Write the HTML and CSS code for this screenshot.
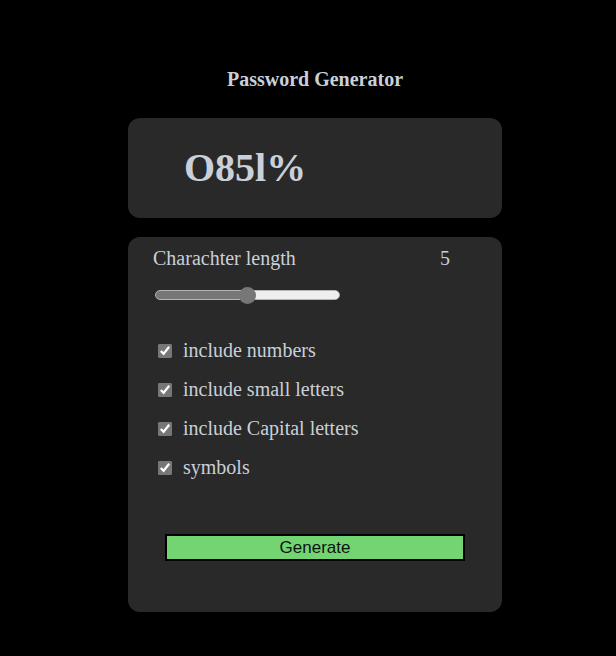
FILE: index.html
```html
<!DOCTYPE html>
<html>
<head>
<meta charset="utf-8">
<link rel="stylesheet" href="styles.css">
</head>
<body>
<div class="app">
  <h3 class="title">Password Generator</h3>
  <div class="card display">
    <span class="password">O85l%</span>
  </div>
  <div class="card settings">
    <div class="length-row">
      <span>Charachter length</span>
      <span class="length-value">5</span>
    </div>
    <input class="slider" type="range" min="0" max="10" value="5">
    <div class="options">
      <label class="option"><input type="checkbox" checked><span>include numbers</span></label>
      <label class="option"><input type="checkbox" checked><span>include small letters</span></label>
      <label class="option"><input type="checkbox" checked><span>include Capital letters</span></label>
      <label class="option"><input type="checkbox" checked><span>symbols</span></label>
    </div>
    <button class="generate">Generate</button>
  </div>
</div>
</body>
</html>
```
FILE: styles.css
```css
html, body {
  margin: 0;
  padding: 0;
  background: #000;
}
body {
  font-family: "Liberation Serif", "Times New Roman", serif;
  color: #c9d0da;
}
.app {
  display: flex;
  flex-direction: column;
  align-items: center;
  padding-top: 68px;
  padding-left: 14px;
}
.title {
  margin: 0;
  font-size: 20px;
  font-weight: bold;
  line-height: 23px;
}
.card {
  width: 374px;
  background: #292929;
  border-radius: 12px;
  box-sizing: border-box;
}
.display {
  margin-top: 27px;
  height: 100px;
  display: flex;
  align-items: center;
  padding-left: 56px;
}
.password {
  font-size: 40px;
  font-weight: bold;
  line-height: 46px;
}
.settings {
  margin-top: 19px;
  height: 375px;
  padding: 10px 0 0 25px;
  display: flex;
  flex-direction: column;
}
.length-row {
  display: flex;
  justify-content: space-between;
  width: 297px;
  font-size: 20px;
  line-height: 23px;
}
.slider {
  -webkit-appearance: none;
  appearance: none;
  margin: 20px 0 0 2px;
  width: 185px;
  height: 10px;
  box-sizing: border-box;
  border: 1px solid #b5b5b5;
  border-radius: 5px;
  background: linear-gradient(to right, #777 0%, #777 50%, #efefef 50%, #efefef 100%);
}
.slider::-webkit-slider-thumb {
  -webkit-appearance: none;
  appearance: none;
  width: 17px;
  height: 17px;
  border-radius: 50%;
  background: #777;
  border: none;
}
.options {
  margin-top: 39px;
  display: flex;
  flex-direction: column;
  gap: 16px;
}
.option {
  display: flex;
  align-items: center;
  font-size: 20px;
  line-height: 23px;
}
.option input {
  margin: 0 11px 0 5px;
  width: 14px;
  height: 14px;
  accent-color: #777;
}
.generate {
  margin: 55px 0 0 12px;
  width: 300px;
  height: 27px;
  background: #72d572;
  border: 2px solid #000;
  font-family: "Liberation Sans", Arial, sans-serif;
  font-size: 17px;
  color: #111;
  padding: 0;
}
```
